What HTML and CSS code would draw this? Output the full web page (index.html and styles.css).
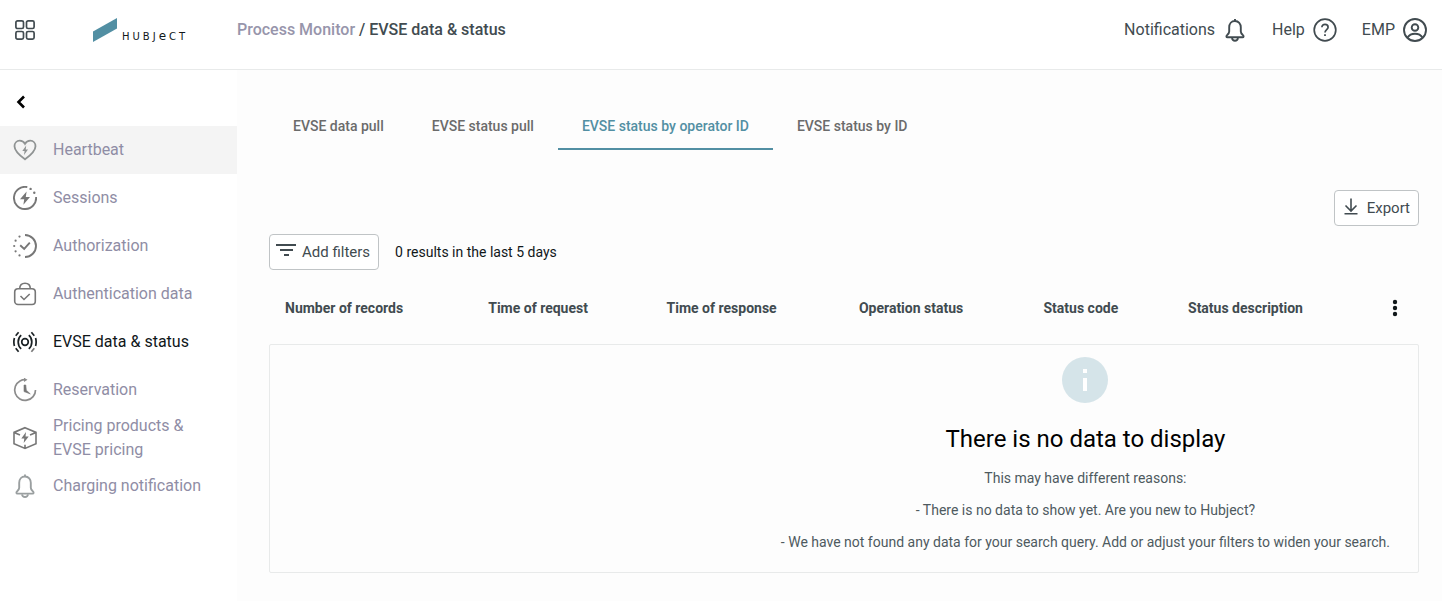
FILE: index.html
```html
<!DOCTYPE html>
<html lang="en">
<head>
    <meta charset="UTF-8">
    <meta name="viewport" content="width=device-width, initial-scale=1.0">
    <title>EVSE data &amp; status</title>
    <link rel="stylesheet" href="styles.css">
</head>

<body>
    <header class="topbar">
        <div class="brand">
            <button type="button" class="icon-button" aria-label="Apps">
                <svg width="24" height="24" viewBox="0 0 24 24" fill="none" stroke="#414b50" stroke-width="1.7">
                    <rect x="2.9" y="2.900" width="7.600" height="7.600" rx="1.6"/>
                    <rect x="13.500" y="2.900" width="7.600" height="7.600" rx="1.6"/>
                    <rect x="2.900" y="13.500" width="7.600" height="7.600" rx="1.6"/>
                    <rect x="13.500" y="13.500" width="7.600" height="7.600" rx="1.6"/>
                </svg>
            </button>
            <a href="#" class="logo">
                <svg width="24" height="24" viewBox="0 0 24 24"><path d="M0 13.5L24 0v10.5L0 24z" fill="#528fa3"/></svg>
                <span class="logo-text">HUBJ<span class="logo-e">e</span>CT</span>
            </a>
        </div>
        <nav class="breadcrumb">
            <a href="#">Process Monitor</a> / EVSE data &amp; status
        </nav>
        <div class="top-links">
            <a href="#">Notifications
                <svg width="24" height="24" viewBox="0 0 24 24" fill="none" stroke="#414b50" stroke-width="1.9" stroke-linejoin="round">
                    <path d="M12 1v2M12 3c-3.600 0-5.800 2.800-5.800 6.300v4.200c0 1.500-.8 2.400-2 3.500-1.200 1-1 2.300.3 2.300h15c1.300 0 1.500-1.300.3-2.300-1.200-1.100-2-2-2-3.500V9.300C17.800 5.800 15.600 3 12 3z"/>
                    <path d="M9 20c.3 1.700 1.400 2.700 3 2.700s2.700-1 3-2.700"/>
                </svg>
            </a>
            <a href="#">Help
                <svg width="24" height="24" viewBox="0 0 24 24" fill="none" stroke="#414b50" stroke-width="1.7">
                    <circle cx="12" cy="12" r="10.800"/>
                    <path d="M8.900 9.300C8.900 7.400 10.200 6.300 12 6.300s3.100 1.100 3.100 2.900c0 2.300-3.100 2.500-3.100 5.200"/>
                    <path d="M12 16.300v1.800" stroke-width="1.800"/>
                </svg>
            </a>
            <a href="#">EMP
                <svg width="24" height="24" viewBox="0 0 24 24" fill="none" stroke="#414b50" stroke-width="1.9">
                    <circle cx="12" cy="12" r="11"/>
                    <circle cx="12" cy="9.500" r="3.300"/>
                    <path d="M4.500 19.500c1.600-2.600 4.300-3.800 7.500-3.800s5.900 1.200 7.500 3.800"/>
                </svg>
            </a>
        </div>
    </header>

    <div class="layout">
        <aside class="sidebar">
            <button type="button" class="icon-button collapse" aria-label="Collapse menu">
                <svg width="10" height="14" viewBox="0 0 10 14" fill="none" stroke="#000" stroke-width="2.600"><path d="M8 1.500L2.500 7 8 12.500"/></svg>
            </button>
            <nav class="menu">
                <a href="#" class="menu-item highlighted">
                    <svg width="24" height="24" viewBox="0 0 24 24" fill="none" stroke="#8f9393" stroke-width="1.800">
                        <path d="M12 21.300C7.500 18 1.500 13.500 1.500 8.200 1.500 5 3.700 2.700 6.700 2.700c2.200 0 4.200 1.200 5.300 3.200 1.100-2 3.100-3.200 5.300-3.200 3 0 5.200 2.300 5.200 5.500 0 5.300-6 9.800-10.500 13.100z"/>
                        <path d="M13.200 7.500L9.300 13h2.300l-.6 4 4-5.500h-2.300z" fill="#8f9393" stroke="none"/>
                    </svg>
                    Heartbeat
                </a>
                <a href="#" class="menu-item">
                    <svg width="24" height="24" viewBox="0 0 24 24" fill="none" stroke="#777" stroke-width="1.9">
                        <path d="M14.300 1.100A11.100 11.100 0 1 0 23.100 11"/>
                        <path d="M13.600 5.500L7 13.200h4.200l-.8 5.500L17 11h-4.200z" fill="#777" stroke="none"/>
                        <g fill="#777" stroke="none"><circle cx="17.600" cy="2.900" r="1.200"/><circle cx="21.300" cy="6.700" r="1.200"/></g>
                    </svg>
                    Sessions
                </a>
                <a href="#" class="menu-item">
                    <svg width="24" height="24" viewBox="0 0 24 24" fill="none" stroke="#777" stroke-width="1.9">
                        <path d="M12 1a11 11 0 0 1 0 22M7.200 11.200l4 3.800 5.600-6.300"/>
                        <g fill="#777" stroke="none"><circle cx="6.500" cy="2.600" r="1.100"/><circle cx="2.600" cy="6.700" r="1.100"/><circle cx="1.200" cy="12" r="1.100"/><circle cx="2.600" cy="17.300" r="1.100"/><circle cx="6.500" cy="21.400" r="1.100"/></g>
                    </svg>
                    Authorization
                </a>
                <a href="#" class="menu-item">
                    <svg width="24" height="24" viewBox="0 0 24 24" fill="none" stroke="#777" stroke-width="1.600">
                        <rect x="1.700" y="6.800" width="20.600" height="15.700" rx="3.300"/>
                        <path d="M6.700 6.800C6.700 3.200 8.700 1.200 12 1.200s5.300 2 5.300 5.600M7.500 14l3.500 3.500 5.700-5.500"/>
                    </svg>
                    Authentication data
                </a>
                <a href="#" class="menu-item active">
                    <svg width="24" height="24" viewBox="0 0 24 24" fill="none" stroke="#1b2225" stroke-width="1.700">
                        <circle cx="12" cy="12" r="3.300"/>
                        <path d="M8.200 5.200c-4 3.200-4 10.400 0 13.600M15.800 5.200c4 3.200 4 10.400 0 13.600"/>
                        <path d="M5.600 2.300L2.700 5.700M1.400 8c-.7 2.600-.7 5.400 0 8M2.700 18.300l2.900 3.400M18.400 2.300l2.900 3.400M22.600 8c.7 2.600.7 5.400 0 8"/>
                        <path d="M21.300 18.300l-2.900 3.400" stroke="#777"/>
                    </svg>
                    EVSE data &amp; status
                </a>
                <a href="#" class="menu-item">
                    <svg width="24" height="24" viewBox="0 0 24 24" fill="none" stroke="#8c8c8c" stroke-width="1.700">
                        <path d="M7 2.900a10.400 10.400 0 1 0 15.500 9M7 2.900a10.400 10.400 0 0 1 5-1.200"/>
                        <path d="M11 -.3l3.500 2L11 4z" fill="#8c8c8c" stroke="none"/>
                        <path d="M11 7h1.800l.5 5.200 4 3.700-6.300-2.300z" fill="#777" stroke="#777" stroke-width=".6"/>
                    </svg>
                    Reservation
                </a>
                <a href="#" class="menu-item">
                    <svg width="24" height="24" viewBox="0 0 24 24" fill="none" stroke="#777" stroke-width="1.600">
                        <path d="M12 1.700l11 4.700v11.300l-11 4.700-11-4.700V6.400zM1 6.400l6 2.600M23 6.400L17 9M12 22.400v-3.600"/>
                        <path d="M13 6l-4.700 6.400h3l-.6 4.600 5-6.500h-3.200z" fill="#777" stroke="none"/>
                    </svg>
                    Pricing products &amp; EVSE pricing
                </a>
                <a href="#" class="menu-item">
                    <svg width="24" height="24" viewBox="0 0 24 24" fill="none" stroke="#9a9fa0" stroke-width="1.900" stroke-linejoin="round">
                        <path d="M12 .5v2M12 2.500c-3.600 0-5.800 2.800-5.800 6.300v5c0 1.500-.8 2.400-2 3.500-1.200 1-1 2.300.3 2.300h15c1.300 0 1.500-1.300.3-2.300-1.200-1.100-2-2-2-3.500v-5C17.800 5.300 15.600 2.500 12 2.500z"/>
                        <path d="M9 20.300c.3 1.700 1.400 2.700 3 2.700s2.700-1 3-2.700"/>
                    </svg>
                    Charging notification
                </a>
            </nav>
        </aside>

        <main class="content">
            <nav class="tabs">
                <a href="#" class="tab">EVSE data pull</a>
                <a href="#" class="tab">EVSE status pull</a>
                <a href="#" class="tab selected">EVSE status by operator ID</a>
                <a href="#" class="tab">EVSE status by ID</a>
            </nav>

            <div class="export-row">
                <button type="button" class="btn">
                    <svg width="20" height="20" viewBox="0 0 20 20" fill="none" stroke="#414b50" stroke-width="1.600">
                        <path d="M10 .5v12.500M4.500 7.500L10 13l5.500-5.500M3.500 15.700h13"/>
                    </svg>
                    Export
                </button>
            </div>

            <div class="filter-row">
                <button type="button" class="btn">
                    <svg width="20" height="20" viewBox="0 0 20 20" fill="none" stroke="#414b50" stroke-width="1.800">
                        <path d="M0 3h20M4 8h13M8 13h5"/>
                    </svg>
                    Add filters
                </button>
                <span>0 results in the last 5 days</span>
            </div>

            <table class="records">
                <thead>
                    <tr>
                        <th>Number of records</th>
                        <th>Time of request</th>
                        <th>Time of response</th>
                        <th>Operation status</th>
                        <th>Status code</th>
                        <th>Status description</th>
                        <th class="col-menu">
                            <button type="button" class="icon-button" aria-label="Columns">
                                <svg width="16" height="24" viewBox="0 0 16 24" fill="#10171a"><circle cx="8" cy="6" r="2.200"/><circle cx="8" cy="12" r="2.200"/><circle cx="8" cy="18" r="2.200"/></svg>
                            </button>
                        </th>
                    </tr>
                </thead>
            </table>

            <section class="empty">
                <div class="empty-message">
                    <svg width="46" height="46" viewBox="0 0 46 46"><circle cx="23" cy="23" r="23" fill="#d5e4e9"/><path d="M21 12h4v4h-4zM21 21h4v13h-4z" fill="#fff"/></svg>
                    <h2>There is no data to display</h2>
                    <p>This may have different reasons:</p>
                    <p>- There is no data to show yet. Are you new to Hubject?</p>
                    <p>- We have not found any data for your search query. Add or adjust your filters to widen your search.</p>
                </div>
            </section>
        </main>
    </div>
</body>
</html>
```

FILE: styles.css
```css
* {
    box-sizing: border-box;
}

body {
    margin: 0;
    min-height: 100vh;
    display: flex;
    flex-direction: column;
    background-color: #fff;
    color: #414b50;
    font-family: Roboto, sans-serif;
    font-size: 16px;
    line-height: 24px;
}

a {
    color: inherit;
    text-decoration: none;
}

svg {
    display: block;
    flex-shrink: 0;
}

.icon-button {
    display: block;
    padding: 0;
    border: none;
    background: none;
    cursor: pointer;
}

/* top bar */
.topbar {
    display: flex;
    height: 70px;
    padding: 18px 15px 0 13px;
    border-bottom: 1px solid #e8eaea;
}

.brand {
    display: flex;
    align-items: flex-start;
    width: 224px;
}

.logo {
    display: flex;
    align-items: flex-end;
    gap: 5px;
    margin-left: 56px;
}

.logo-text {
    color: #10171a;
    font-family: "DejaVu Sans", sans-serif;
    font-size: 10px;
    line-height: 10px;
    letter-spacing: 3px;
}

.logo-e {
    font-size: 12px;
}

.breadcrumb {
    font-weight: 500;
}

.breadcrumb a {
    color: #9795ab;
}

.top-links {
    display: flex;
    gap: 25px;
    margin-left: auto;
}

.top-links a {
    display: flex;
    gap: 8px;
    height: 24px;
}

/* sidebar */
.layout {
    display: flex;
    flex: 1;
}

.sidebar {
    width: 237px;
    flex-shrink: 0;
}

.collapse {
    margin: 25px 0 17px 16px;
}

.menu-item {
    display: flex;
    align-items: center;
    gap: 16px;
    height: 48px;
    padding: 0 32px 0 13px;
    color: #8f8da5;
}

.menu-item.highlighted {
    background-color: #f4f4f4;
}

.menu-item.active {
    color: #10171a;
}

/* content */
.content {
    flex: 1;
    padding: 32px 23px 28px 32px;
    background-color: #fdfdfd;
    font-size: 14px;
}

.tabs {
    display: flex;
}

.tab {
    height: 48px;
    padding: 12px 24px;
    color: #6b6b6b;
    font-weight: 500;
}

.tab.selected {
    color: #528fa3;
    border-bottom: 2px solid #528fa3;
}

.export-row {
    display: flex;
    justify-content: flex-end;
    margin-top: 40px;
}

.btn {
    display: flex;
    align-items: center;
    gap: 6px;
    height: 36px;
    padding: 0 8px 0 6px;
    border: 1px solid #c0c4c6;
    border-radius: 4px;
    background-color: #fff;
    color: #414b50;
    font-family: inherit;
    font-size: 15px;
    cursor: pointer;
}

.filter-row {
    display: flex;
    align-items: center;
    gap: 16px;
    margin-top: 8px;
    color: #10171a;
}

.records {
    width: 100%;
    margin-top: 10px;
    border-collapse: collapse;
}

.records th {
    height: 56px;
    padding: 0 16px;
    font-weight: 700;
    text-align: left;
    white-space: nowrap;
}

.records .col-menu {
    width: 48px;
}

.empty {
    display: flex;
    justify-content: flex-end;
    margin-top: 8px;
    padding: 12px 28px 18px;
    border: 1px solid #e8eaea;
    border-radius: 2px;
}

.empty-message {
    display: flex;
    flex-direction: column;
    align-items: center;
    color: #4e5a5f;
}

.empty-message h2 {
    margin: 20px 0 11px;
    color: #000;
    font-size: 24px;
    font-weight: 400;
    line-height: 32px;
}

.empty-message p {
    margin: 0 0 8px;
}

.empty-message p:last-child {
    margin-bottom: 0;
}
```
